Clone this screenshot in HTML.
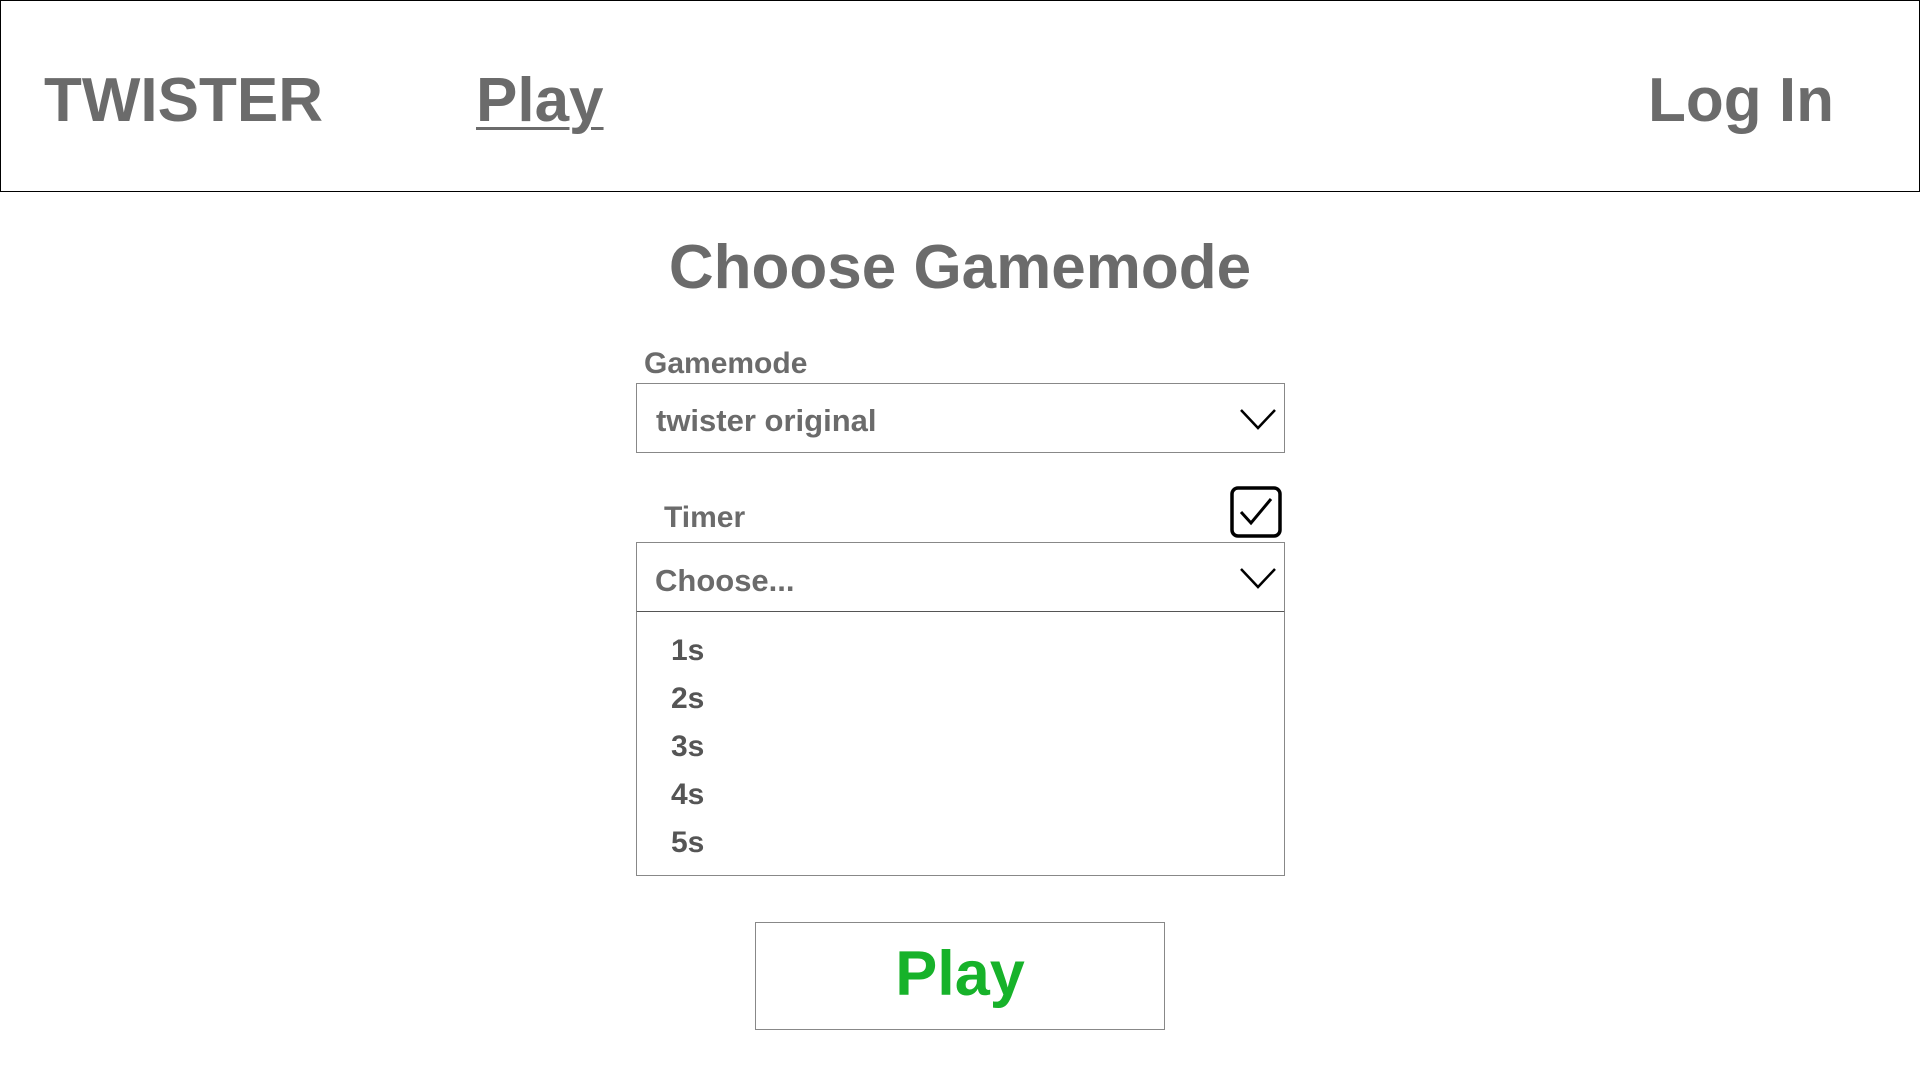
<!DOCTYPE html>
<html><head><meta charset="utf-8"><style>
*{margin:0;padding:0;box-sizing:border-box}
body{width:1920px;height:1080px;background:#fff;font-family:"Liberation Sans",sans-serif;color:#6b6b6b;position:relative;overflow:hidden;font-weight:bold}
.a{position:absolute;white-space:nowrap}
header{position:absolute;left:0;top:0;width:1920px;height:192px;border:1px solid #000}
.box{position:absolute;border:1px solid #888;background:#fff}
.chev{position:absolute}
</style></head><body>
<header></header>
<div class="a" style="left:44px;top:61px;font-size:62px;line-height:80px">TWISTER</div>
<div class="a" style="left:476px;top:61px;font-size:62px;line-height:80px;text-decoration:underline;text-decoration-thickness:3px;text-underline-offset:6px">Play</div>
<div class="a" style="left:1648px;top:61px;font-size:62px;line-height:80px">Log In</div>
<div class="a" style="left:0;width:1920px;text-align:center;top:228px;font-size:62px;line-height:80px">Choose Gamemode</div>
<div class="a" style="left:644px;top:346px;font-size:30px;line-height:36px">Gamemode</div>
<div class="box" style="left:636px;top:383px;width:649px;height:70px"></div>
<div class="a" style="left:656px;top:402px;font-size:31px;line-height:38px">twister original</div>
<svg class="chev" style="left:1238px;top:406px" width="40" height="26"><polyline points="3,4 20,22 37,4" fill="none" stroke="#000" stroke-width="2.5"/></svg>
<div class="a" style="left:664px;top:500px;font-size:30px;line-height:36px">Timer</div>
<svg class="chev" style="left:1229px;top:485px" width="54" height="54"><rect x="3" y="3" width="48" height="48" rx="6" fill="none" stroke="#000" stroke-width="3.5"/><polyline points="12,27 22,38 42,14" fill="none" stroke="#000" stroke-width="3"/></svg>
<div class="box" style="left:636px;top:542px;width:649px;height:71px;border-bottom:2px solid #555"></div>
<div class="a" style="left:655px;top:562px;font-size:31px;line-height:38px">Choose...</div>
<svg class="chev" style="left:1238px;top:565px" width="40" height="26"><polyline points="3,4 20,22 37,4" fill="none" stroke="#000" stroke-width="2.5"/></svg>
<div class="box" style="left:636px;top:612px;width:649px;height:264px;border-top:none"></div>
<div class="a" style="left:671px;top:627px;font-size:30px;line-height:48px;color:#555;white-space:normal">1s<br>2s<br>3s<br>4s<br>5s</div>
<div class="box" style="left:755px;top:922px;width:410px;height:108px"></div>
<div class="a" style="left:755px;width:410px;text-align:center;top:934px;font-size:63px;line-height:80px;color:#17b22a">Play</div>
</body></html>
